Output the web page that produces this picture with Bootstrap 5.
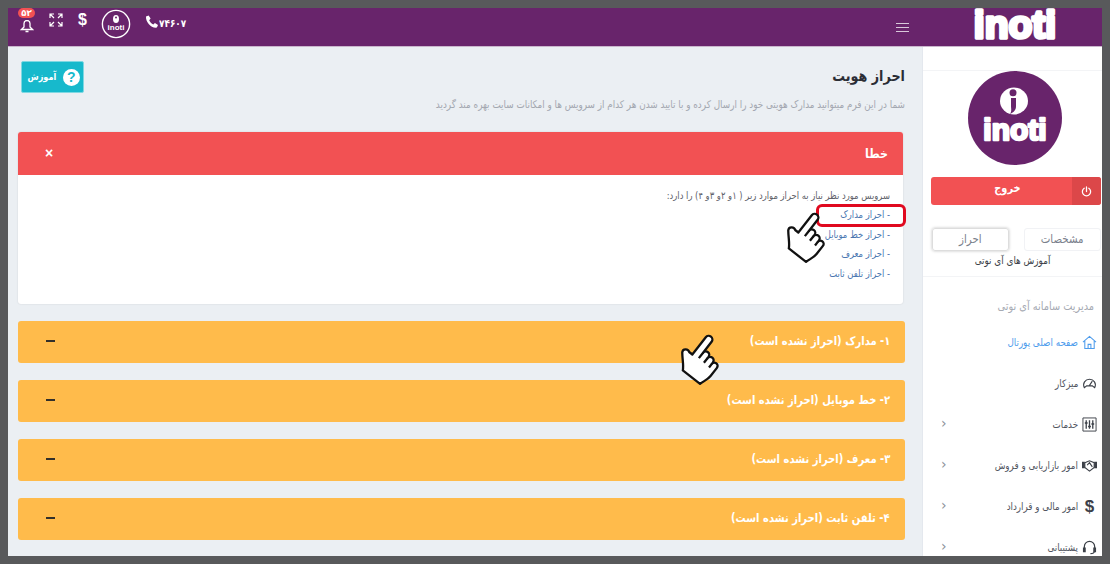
<!DOCTYPE html>
<html lang="fa" dir="rtl">
<head>
    <meta charset="UTF-8">
    <meta name="viewport" content="width=device-width, initial-scale=1.0">
    <title>احراز هویت</title>
    <link href="https://cdn.jsdelivr.net/npm/bootstrap@5.3.0/dist/css/bootstrap.min.css" rel="stylesheet">
    <style>
        html, body {
            height: 100%;
            overflow: hidden;
        }
        body {
            background: #58595b;
            padding: 8px;
            font-family: "DejaVu Sans", sans-serif;
            font-size: 10px;
            color: #3f4254;
        }
        /* DejaVu arabic is much wider than the original font */
        .tight-text {
            transform: scaleX(.85);
            transform-origin: right center;
        }
        .tight-mid {
            display: inline-block;
            transform: scaleX(.85);
        }
        .frame {
            position: relative;
            width: 1094px;
            height: 548px;
            overflow: hidden;
            background: #ebeff3;
        }
        .topbar {
            height: 39px;
            background: #68246b;
            border-bottom: 1px solid #c9b6cc;
            color: #fff;
            flex: none;
        }
        .brand-area {
            width: 180px;
            height: 38px;
            overflow: hidden;
        }
        .burger {
            width: 13px;
            height: 9px;
            margin-right: 13px;
            border-top: 1px solid #d8c8da;
            border-bottom: 1px solid #d8c8da;
            position: relative;
        }
        .burger::after {
            content: "";
            position: absolute;
            left: 0;
            right: 0;
            top: 3px;
            border-top: 1px solid #d8c8da;
        }
        .top-tools {
            gap: 15px;
            padding-left: 12px;
            direction: ltr;
            height: 38px;
        }
        .bell-wrap {
            position: relative;
            width: 14px;
            margin-top: 10px;
        }
        .count-badge {
            position: absolute;
            top: -10px;
            left: -2px;
            width: 17px;
            height: 10px;
            text-align: center;
            background: #f25153;
            border-radius: 6px;
            font-size: 8.5px;
            line-height: 10px;
            font-weight: 700;
        }
        .expand-ico {
            margin-top: 5px;
        }
        .dollar-mark {
            font-family: "Liberation Sans", sans-serif;
            font-weight: 700;
            font-size: 16px;
            line-height: 1;
            margin-top: 4px;
        }
        .mini-logo {
            margin: 1px -1px 0 -1px;
        }
        .phone-text {
            font-size: 10.5px;
            font-weight: 700;
            margin: 5px 0 0 0;
            display: flex;
            align-items: center;
        }
        .phone-digits {
            display: inline-block;
            transform: scaleX(.85);
            transform-origin: left center;
            margin: 3px 0 0 0;
        }
        .side-col {
            width: 180px;
            background: #fff;
            flex: none;
            border-left: 1px solid #e4e8ee;
            height: 509px;
            overflow: hidden;
        }
        .side-rule {
            height: 24px;
            border-bottom: 1px solid #f3f4f6;
        }
        .logo-box {
            padding-left: 5px;
        }
        .exit-btn {
            width: 170px;
            height: 28px;
            margin: 12px 1px 0 0;
            background: #f25153;
            border: 0;
            color: #fff;
            font-weight: 700;
            font-size: 11.5px;
            border-radius: 3px;
            overflow: hidden;
        }
        .exit-btn:hover {
            background: #f25153;
            color: #fff;
        }
        .exit-icon {
            width: 29px;
            background: #dc4749;
        }
        .exit-label {
            line-height: 22px;
            margin-right: -12px;
        }
        .tab-row {
            margin: 23px 1px 0 0;
            width: 169px;
        }
        .side-tab {
            width: 77px;
            height: 23px;
            font-size: 12px;
            line-height: 21px;
            text-align: center;
            color: #7a7f8c;
            border: 1px solid #f1f2f5;
            border-radius: 3px;
        }
        .side-tab.is-active {
            box-shadow: 0 0 3px rgba(0, 0, 0, .25);
            border-color: #ddd;
        }
        .side-caption {
            font-size: 10.4px;
            line-height: 14px;
            margin-top: 2px;
            padding-bottom: 9px;
            color: #3b3f48;
            border-bottom: 1px solid #f3f4f6;
        }
        .side-head {
            color: #a6aab3;
            font-size: 11.5px;
            padding: 21px 8px 0 0;
            height: 45px;
        }
        .side-link {
            height: 41px;
            padding: 0 5px 0 18px;
            font-size: 10.3px;
            color: #50545e;
        }
        .side-link.is-current {
            color: #4c9bec;
        }
        .side-link .ico {
            width: 15px;
            height: 15px;
            flex: none;
            margin-left: 4px;
        }
        .dollar-ico {
            font-family: "Liberation Sans", sans-serif;
            font-size: 17px;
            font-weight: 700;
            color: #3c4048;
            line-height: 15px;
            text-align: center;
        }
        .chev {
            margin-right: auto;
            color: #8b8f98;
            font-size: 14px;
            line-height: 1;
            margin-top: -3px;
        }
        .main-col {
            width: 914px;
            height: 509px;
            overflow: hidden;
            padding: 14px 17px 0 10px;
        }
        .page-title {
            font-size: 15px;
            font-weight: 700;
            margin: 5px 0 0;
            color: #2b2d35;
            line-height: 20px;
        }
        .page-sub {
            font-size: 10.4px;
            color: #a3a7b0;
            margin: 11px 0 0;
            line-height: 14px;
            white-space: nowrap;
        }
        .help-btn {
            width: 63px;
            height: 32px;
            background: #17b9cc;
            border: 1px solid #7fd8e2;
            color: #fff;
            font-weight: 700;
            font-size: 9.5px;
            padding: 0;
            border-radius: 2px;
            margin-left: 3px;
        }
        .help-btn:hover {
            background: #17b9cc;
            color: #fff;
        }
        .help-dot {
            width: 17px;
            height: 17px;
            border-radius: 50%;
            background: #fff;
            color: #17b9cc;
            font-family: "Liberation Sans", sans-serif;
            font-size: 14px;
            line-height: 17px;
            text-align: center;
        }
        .error-card {
            margin: 21px 2px 0 0;
            height: 172px;
            border: 0;
            border-radius: 3px;
            box-shadow: 0 0 2px rgba(0, 0, 0, .12);
            overflow: hidden;
        }
        .error-card .error-head:first-child {
            height: 43px;
            background: #f25153;
            color: #fff;
            font-size: 13px;
            font-weight: 700;
            padding: 0 15px 0 27px;
            border: 0;
            border-radius: 0;
        }
        .close-mark {
            font-size: 14px;
            font-family: "Liberation Sans", sans-serif;
        }
        .error-body {
            padding: 11px 13px 0;
            font-size: 9.9px;
            line-height: 19.4px;
            color: #5d6068;
        }
        .doc-link {
            color: #4a76b0;
            text-decoration: none;
            display: block;
        }
        .mark-box {
            position: absolute;
            left: 808px;
            top: 196px;
            width: 90px;
            height: 23px;
            border: 3px solid #e0091f;
            border-radius: 6px;
        }
        .hand-a, .hand-b {
            position: absolute;
            width: 46px;
            height: 53px;
        }
        .hand-a {
            left: 776px;
            top: 203px;
        }
        .hand-b {
            left: 670px;
            top: 325px;
        }
        .doc-bar {
            height: 42px;
            margin-top: 17px;
            background: #ffbb4b;
            color: #fff;
            border-radius: 3px;
            padding: 0 15px 0 28px;
            font-size: 11.8px;
            font-weight: 700;
        }
        .minus-mark {
            width: 9px;
            height: 2px;
            margin-top: -2px;
            background: #33302a;
        }
    </style>
</head>
<body>
    <div class="frame d-flex flex-column">
        <nav class="topbar d-flex align-items-center justify-content-between">
            <div class="d-flex align-items-center">
                <div class="brand-area d-flex justify-content-center">
                    <svg width="180" height="38" viewBox="0 0 180 38">
                        <text x="93" y="30" text-anchor="middle" direction="ltr" font-family="Liberation Sans, sans-serif" font-weight="700" font-size="39" fill="#fff" stroke="#fff" stroke-width="3.500" stroke-linejoin="round">inoti</text>
                    </svg>
                </div>
                <div class="burger"></div>
            </div>
            <div class="top-tools d-flex align-items-start">
                <div class="bell-wrap">
                    <span class="count-badge">۵۳</span>
                    <svg width="14" height="13" viewBox="0 0 14 13" fill="none" stroke="#fff" stroke-width="1.300"><path d="M4 7V3.500a3 3 0 0 1 6 0V7l2.500 2.500h-11zM5.500 11.500h3"/></svg>
                </div>
                <svg class="expand-ico" width="14" height="14" viewBox="0 0 14 14" fill="none" stroke="#fff" stroke-width="1.200"><path d="M1 5V1h4M1 1l4 4M9 1h4v4M13 1L9 5M1 9v4h4M1 13l4-4M13 9v4H9M13 13L9 9"/></svg>
                <span class="dollar-mark">$</span>
                <svg class="mini-logo" width="30" height="30" viewBox="0 0 30 30">
                    <circle cx="15" cy="15" r="13.600" fill="none" stroke="#fff" stroke-width="1.400"/>
                    <ellipse cx="15" cy="10" rx="3" ry="4" fill="#fff"/>
                    <circle cx="15" cy="8.500" r="1" fill="#68246b"/>
                    <text x="15" y="21" text-anchor="middle" direction="ltr" font-family="Liberation Sans, sans-serif" font-weight="700" font-size="8" fill="#fff">inoti</text>
                </svg>
                <span class="phone-text">
                    <svg width="14" height="14" viewBox="0 0 14 14" fill="#fff"><path d="M1 1.500 3.600.4l2 3.200L4.200 5.200c.7 1.800 2.300 3.400 4.100 4.200l1.600-1.400 3.100 2-1.100 2.600C6 13.400.6 7 1 1.500z"/></svg>
                    <span class="phone-digits">۷۴۶۰۷</span>
                </span>
            </div>
        </nav>
        <div class="d-flex">
            <aside class="side-col">
                <div class="side-rule"></div>
                <div class="logo-box d-flex justify-content-center">
                    <svg width="94" height="94" viewBox="0 0 94 94">
                        <circle cx="47" cy="47" r="47" fill="#68246b"/>
                        <ellipse cx="46" cy="30" rx="14" ry="13.500" fill="#fff"/>
                        <circle cx="45" cy="21.700" r="3.500" fill="#68246b"/>
                        <path d="M43 27h5v8c0 4-2 6-6 8 2-3 1-5 1-8z" fill="#68246b"/>
                        <text x="47" y="69" text-anchor="middle" direction="ltr" font-family="Liberation Sans, sans-serif" font-weight="700" font-size="30" fill="#fff" stroke="#fff" stroke-width="2.500" stroke-linejoin="round">inoti</text>
                    </svg>
                </div>
                <button class="exit-btn btn d-flex align-items-stretch p-0" type="button">
                    <span class="exit-icon d-flex align-items-center justify-content-center">
                        <svg width="11" height="11" viewBox="0 0 12 12" fill="none" stroke="#fff" stroke-width="1.400" stroke-linecap="round"><path d="M3.500 2.500a4.500 4.500 0 1 0 5 0M6 1v5"/></svg>
                    </span>
                    <span class="exit-label flex-grow-1 text-center"><span class="tight-mid">خروج</span></span>
                </button>
                <div class="tab-row d-flex justify-content-between">
                    <div class="side-tab"><span class="tight-mid">مشخصات</span></div>
                    <div class="side-tab is-active"><span class="tight-mid">احراز</span></div>
                </div>
                <div class="side-caption text-center"><span class="tight-mid">آموزش های آی نوتی</span></div>
                <div class="side-head"><div class="tight-text">مدیریت سامانه آی نوتی</div></div>
                <div class="side-link is-current d-flex align-items-center">
                    <svg class="ico" viewBox="0 0 16 16" fill="none" stroke="#4c9bec" stroke-width="1.100"><path d="M1 7.500 8 1.500l7 6M3 6.500V14.500h10V6.500M6.500 14.500V10h3v4.500"/></svg>
                    <span class="tight-text">صفحه اصلی پورتال</span>
                </div>
                <div class="side-link d-flex align-items-center">
                    <svg class="ico" viewBox="0 0 16 16" fill="none" stroke="#3c4048" stroke-width="1.200"><path d="M2.500 12.500C.2 8 3.500 3.500 8 3.500s7.800 4.500 5.500 9l-2.500-2H5zM8 10l3-4.500"/></svg>
                    <span class="tight-text">میزکار</span>
                </div>
                <div class="side-link d-flex align-items-center">
                    <svg class="ico" viewBox="0 0 16 16" fill="none" stroke="#3c4048"><path stroke-width="1" d="M1 1h14v14H1z"/><path stroke-width="1.400" d="M4.500 3.500v9M8 3.500v9M11.500 3.500v9"/><path stroke-width="1.600" d="M3 6.500h3M6.500 10h3M10 7.500h3"/></svg>
                    <span class="tight-text">خدمات</span>
                    <span class="chev">‹</span>
                </div>
                <div class="side-link d-flex align-items-center">
                    <svg class="ico" viewBox="0 0 16 16" fill="none" stroke="#3c4048" stroke-width="1.200"><path fill="#3c4048" stroke="none" d="M0 4h3v7H0zM13 4h3v7h-3z"/><path d="M3 5l5-2 5 2v5l-5 4-5-4zM5.500 7.500 8 5l3 4.500"/></svg>
                    <span class="tight-text">امور بازاریابی و فروش</span>
                    <span class="chev">‹</span>
                </div>
                <div class="side-link d-flex align-items-center">
                    <span class="ico dollar-ico">$</span>
                    <span class="tight-text">امور مالی و قرارداد</span>
                    <span class="chev">‹</span>
                </div>
                <div class="side-link d-flex align-items-center">
                    <svg class="ico" viewBox="0 0 16 16" fill="none" stroke="#3c4048" stroke-width="1.300"><path d="M2.500 9V7a5.500 5.500 0 0 1 11 0v2M13 12.500c0 1.500-2 2-4 2"/><path fill="#3c4048" stroke="none" d="M1 8h3v5H1zM12 8h3v5h-3z"/></svg>
                    <span class="tight-text">پشتیبانی</span>
                    <span class="chev">‹</span>
                </div>
            </aside>
            <main class="main-col flex-grow-1">
                <div class="d-flex justify-content-between">
                    <div>
                        <h1 class="page-title tight-text">احراز هویت</h1>
                        <p class="page-sub tight-text">شما در این فرم میتوانید مدارک هویتی خود را ارسال کرده و با تایید شدن هر کدام از سرویس ها و امکانات سایت بهره مند گردید</p>
                    </div>
                    <button class="help-btn btn d-flex align-items-center justify-content-center gap-1" type="button">
                        <span class="help-dot fw-bold">?</span>
                        <span class="tight-mid">آموزش</span>
                    </button>
                </div>
                <section class="card error-card">
                    <div class="error-head card-header d-flex align-items-center justify-content-between">
                        <span class="tight-text">خطا</span>
                        <span class="close-mark">×</span>
                    </div>
                    <div class="error-body card-body">
                        <div class="tight-text">سرویس مورد نظر نیاز به احراز موارد زیر ( ۱و ۲و ۳و ۴) را دارد:</div>
                        <a class="doc-link tight-text" href="#">- احراز مدارک</a>
                        <a class="doc-link tight-text" href="#">- احراز خط موبایل</a>
                        <a class="doc-link tight-text" href="#">- احراز معرف</a>
                        <a class="doc-link tight-text" href="#">- احراز تلفن ثابت</a>
                    </div>
                </section>
                <div class="doc-bar d-flex align-items-center justify-content-between"><span class="tight-text">۱- مدارک (احراز نشده است)</span><span class="minus-mark"></span></div>
                <div class="doc-bar d-flex align-items-center justify-content-between"><span class="tight-text">۲- خط موبایل (احراز نشده است)</span><span class="minus-mark"></span></div>
                <div class="doc-bar d-flex align-items-center justify-content-between"><span class="tight-text">۳- معرف (احراز نشده است)</span><span class="minus-mark"></span></div>
                <div class="doc-bar d-flex align-items-center justify-content-between"><span class="tight-text">۴- تلفن ثابت (احراز نشده است)</span><span class="minus-mark"></span></div>
            </main>
        </div>
        <div class="mark-box"></div>
        <svg class="hand-a" viewBox="0 0 40 46"><g transform="rotate(38 20 22)" fill="#fff" stroke="#111" stroke-width="2" stroke-linejoin="round"><path d="M12 24V5a3.200 3.200 0 0 1 6.400 0V17a3 3 0 0 1 6 0v1.500a3 3 0 0 1 6 0V20a2.800 2.800 0 0 1 5.600 0V29c0 4-2 7-3 11H14c-2-4-6-7-10-12-2-3 2-6 4.500-4z"/><path d="M18.400 17v6M24.400 18.500v5M30.400 20v4" fill="none"/></g></svg>
        <svg class="hand-b" viewBox="0 0 40 46"><g transform="rotate(38 20 22)" fill="#fff" stroke="#111" stroke-width="2" stroke-linejoin="round"><path d="M12 24V5a3.200 3.200 0 0 1 6.400 0V17a3 3 0 0 1 6 0v1.500a3 3 0 0 1 6 0V20a2.800 2.800 0 0 1 5.600 0V29c0 4-2 7-3 11H14c-2-4-6-7-10-12-2-3 2-6 4.500-4z"/><path d="M18.400 17v6M24.400 18.500v5M30.400 20v4" fill="none"/></g></svg>
    </div>
    <script src="https://cdn.jsdelivr.net/npm/bootstrap@5.3.0/dist/js/bootstrap.bundle.min.js"></script>
</body>
</html>
